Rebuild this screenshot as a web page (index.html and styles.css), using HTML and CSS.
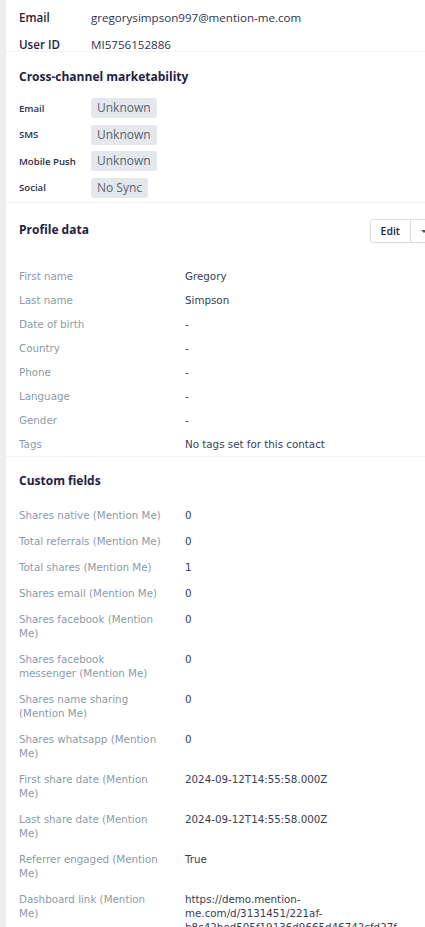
FILE: index.html
```html
<!DOCTYPE html>
<html lang="en">
<head>
    <meta charset="UTF-8">
    <meta name="viewport" content="width=device-width, initial-scale=1.0">
    <title>Contact profile</title>
    <link rel="stylesheet" href="styles.css">
</head>
<body>
    <div class="page">
        <!-- Identity -->
        <section class="card card-ident">
            <div class="ident-row">
                <span class="ident-label">Email</span>
                <span class="ident-value">gregorysimpson997@mention-me.com</span>
            </div>
            <div class="ident-row">
                <span class="ident-label">User ID</span>
                <span class="ident-value">MI5756152886</span>
            </div>
        </section>

        <!-- Marketability -->
        <section class="card card-market">
            <h2 class="card-title">Cross-channel marketability</h2>
            <div class="market-list">
                <div class="market-row">
                    <span class="market-label">Email</span>
                    <span class="badge">Unknown</span>
                </div>
                <div class="market-row">
                    <span class="market-label">SMS</span>
                    <span class="badge">Unknown</span>
                </div>
                <div class="market-row">
                    <span class="market-label">Mobile Push</span>
                    <span class="badge">Unknown</span>
                </div>
                <div class="market-row">
                    <span class="market-label">Social</span>
                    <span class="badge">No Sync</span>
                </div>
            </div>
        </section>

        <!-- Profile data -->
        <section class="card card-profile">
            <div class="card-head">
                <h2 class="card-title">Profile data</h2>
                <div class="btn-group">
                    <button class="btn">Edit</button>
                    <button class="btn btn-caret"><span class="caret"></span></button>
                </div>
            </div>
            <div class="fields fields-profile">
                <div class="field"><span class="field-label">First name</span><span class="field-value">Gregory</span></div>
                <div class="field"><span class="field-label">Last name</span><span class="field-value">Simpson</span></div>
                <div class="field"><span class="field-label">Date of birth</span><span class="field-value">-</span></div>
                <div class="field"><span class="field-label">Country</span><span class="field-value">-</span></div>
                <div class="field"><span class="field-label">Phone</span><span class="field-value">-</span></div>
                <div class="field"><span class="field-label">Language</span><span class="field-value">-</span></div>
                <div class="field"><span class="field-label">Gender</span><span class="field-value">-</span></div>
                <div class="field"><span class="field-label">Tags</span><span class="field-value">No tags set for this contact</span></div>
            </div>
        </section>

        <!-- Custom fields -->
        <section class="card card-custom">
            <h2 class="card-title">Custom fields</h2>
            <div class="fields fields-custom">
                <div class="field"><span class="field-label">Shares native (Mention Me)</span><span class="field-value">0</span></div>
                <div class="field"><span class="field-label">Total referrals (Mention Me)</span><span class="field-value">0</span></div>
                <div class="field"><span class="field-label">Total shares (Mention Me)</span><span class="field-value">1</span></div>
                <div class="field"><span class="field-label">Shares email (Mention Me)</span><span class="field-value">0</span></div>
                <div class="field"><span class="field-label">Shares facebook (Mention Me)</span><span class="field-value">0</span></div>
                <div class="field"><span class="field-label">Shares facebook messenger (Mention Me)</span><span class="field-value">0</span></div>
                <div class="field"><span class="field-label">Shares name sharing (Mention Me)</span><span class="field-value">0</span></div>
                <div class="field"><span class="field-label">Shares whatsapp (Mention Me)</span><span class="field-value">0</span></div>
                <div class="field"><span class="field-label">First share date (Mention Me)</span><span class="field-value">2024-09-12T14:55:58.000Z</span></div>
                <div class="field"><span class="field-label">Last share date (Mention Me)</span><span class="field-value">2024-09-12T14:55:58.000Z</span></div>
                <div class="field"><span class="field-label">Referrer engaged (Mention Me)</span><span class="field-value">True</span></div>
                <div class="field"><span class="field-label">Dashboard link (Mention Me)</span><span class="field-value">https://demo.mention-me.com/d/3131451/221af-b8c42bed505f19136d9665d46742cfd27f</span></div>
            </div>
        </section>
    </div>
</body>
</html>
```

FILE: styles.css
```css
html, body {
    margin: 0;
    padding: 0;
    background: #fff;
    overflow: hidden;
}

body {
    font-family: "Open Sans", "DejaVu Sans", sans-serif;
    color: #2f3350;
    height: 927px;
}

.page {
    border-left: 6px solid #eeeeee;
    min-height: 927px;
}

.card {
    padding: 16px 0 0 13px;
    border-bottom: 1px solid #f3f3f3;
}

.card-title {
    margin: 0;
    font-size: 12px;
    line-height: 16px;
    font-weight: 700;
    color: #1d2142;
}

/* identity rows at the top */
.card-ident {
    padding-top: 12px;
    display: flex;
    flex-direction: column;
    gap: 15px;
}

.ident-row {
    display: flex;
    line-height: 12px;
    font-size: 11.6px;
}

.ident-label {
    width: 72px;
    font-weight: 600;
    color: #1f2341;
}

.ident-value {
    color: #2f3350;
}

/* marketability */
.card-market {
    padding-top: 17px;
}

.market-list {
    margin-top: 13px;
    padding-bottom: 4px;
    display: flex;
    flex-direction: column;
    gap: 6.5px;
}

.market-row {
    display: flex;
    align-items: center;
    height: 20px;
}

.market-label {
    width: 72px;
    font-size: 9.6px;
    font-weight: 600;
    color: #2a2e48;
}

.badge {
    background: #e4e8ec;
    color: #5a636e;
    font-size: 12px;
    font-weight: 500;
    line-height: 20px;
    padding: 0 6px;
    border-radius: 3px;
}

/* profile header with button group */
.card-head {
    display: flex;
    justify-content: space-between;
    align-items: flex-start;
}

.card-head .card-title {
    padding-top: 3px;
}

.btn-group {
    display: flex;
    margin-right: -20px;
}

.btn {
    height: 24px;
    padding: 0 10px;
    background: #fff;
    border: 1px solid #dcdcdc;
    border-radius: 3px 0 0 3px;
    font-family: inherit;
    font-size: 10.5px;
    font-weight: 600;
    color: #1f2341;
}

.btn-caret {
    width: 34px;
    border-left: 0;
    border-radius: 0 3px 3px 0;
    padding: 0 0 0 10px;
    text-align: left;
}

.caret {
    display: inline-block;
    border-left: 3px solid transparent;
    border-right: 3px solid transparent;
    border-top: 3px solid #555;
    vertical-align: middle;
}

/* field lists */
.fields {
    display: flex;
    flex-direction: column;
}

.field {
    display: flex;
    font-family: "DejaVu Sans", sans-serif;
    font-size: 10.3px;
    line-height: 14px;
}

.field-label {
    width: 143px;
    flex-shrink: 0;
    margin-right: 23px;
    color: #8b9aa6;
}

.field-value {
    flex: 1;
    padding-right: 20px;
    color: #383c56;
    word-break: break-word;
}

.fields-profile {
    margin-top: 21px;
}

.fields-profile .field {
    padding: 5px 0;
}

.fields-custom {
    margin-top: 13px;
}

.fields-custom .field {
    padding: 6px 0;
}
```
